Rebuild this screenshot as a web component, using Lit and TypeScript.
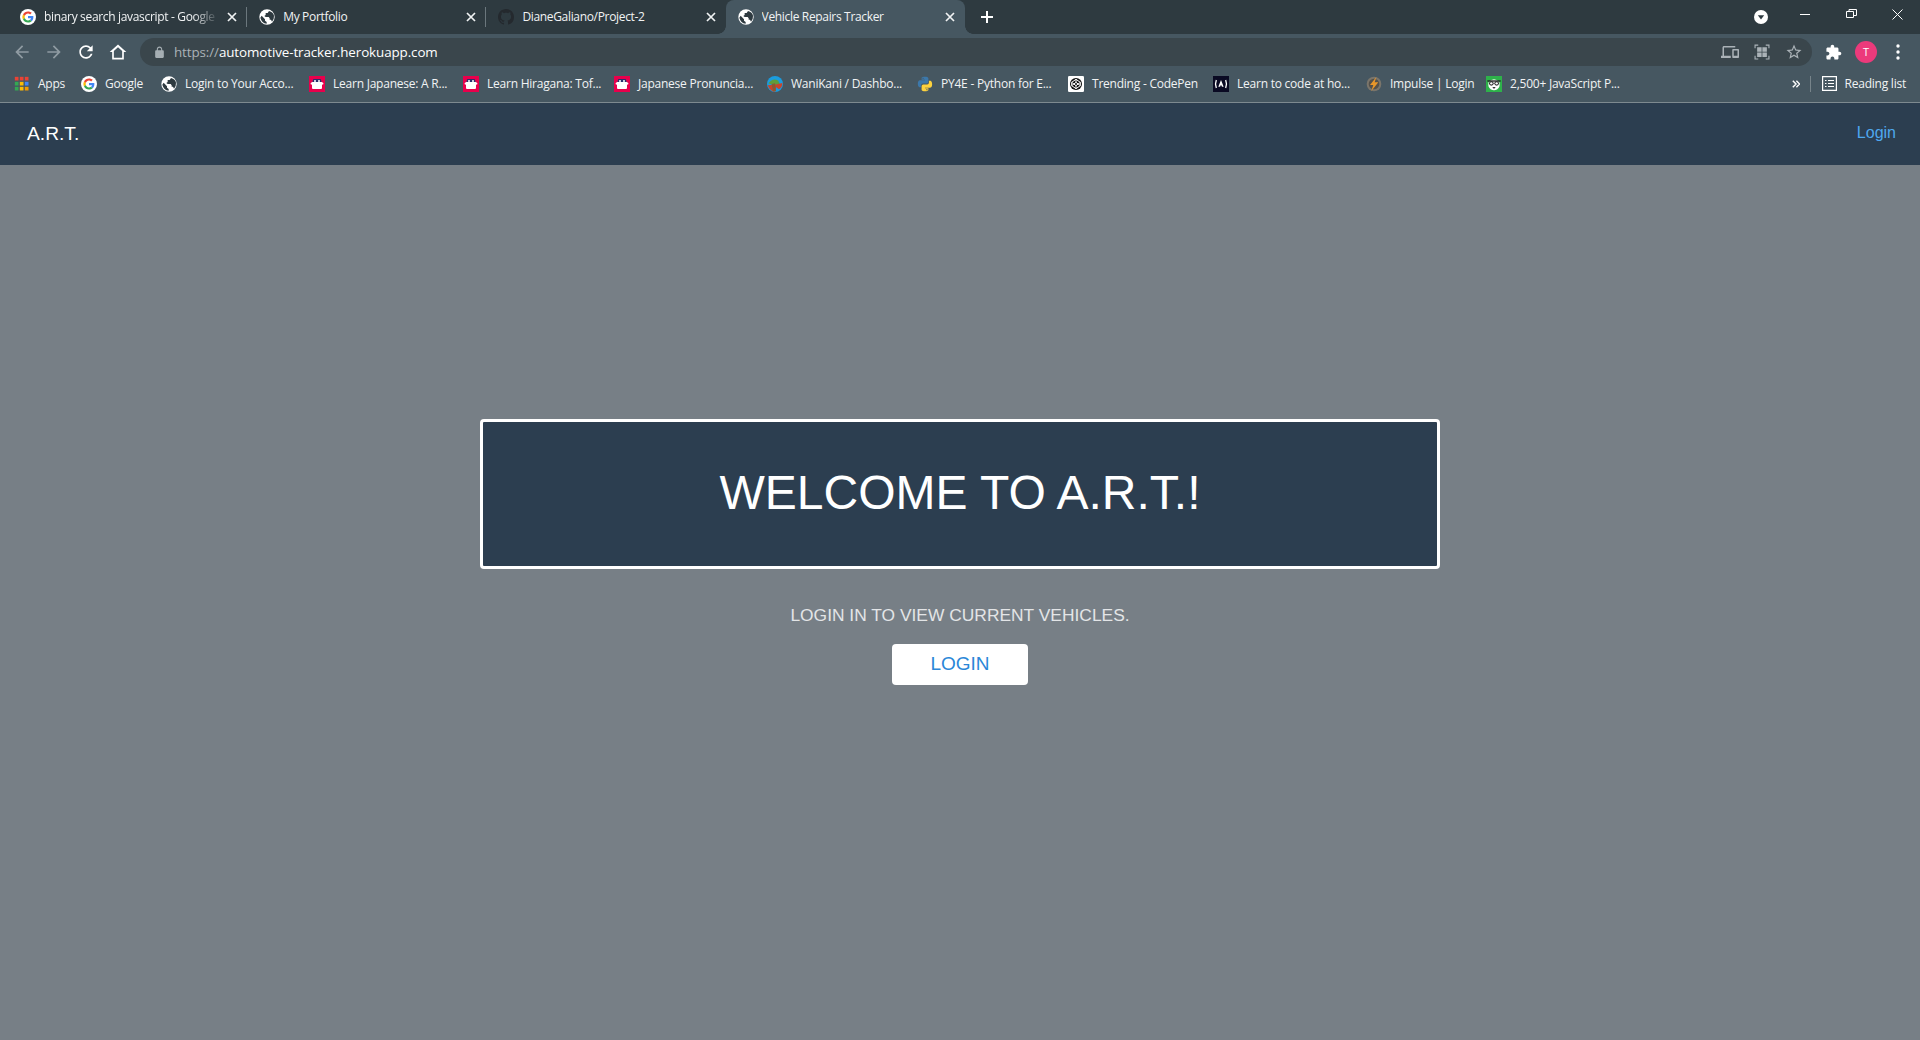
import { LitElement, html, css, svg } from 'lit';
import { customElement } from 'lit/decorators.js';

const google = svg`<circle cx="24" cy="24" r="24" fill="#fff"/><g transform="translate(7.2 7.2) scale(.7)"><path fill="#EA4335" d="M24 9.5c3.54 0 6.71 1.22 9.21 3.6l6.85-6.85C35.9 2.38 30.47 0 24 0 14.62 0 6.51 5.38 2.56 13.22l7.98 6.19C12.43 13.72 17.74 9.5 24 9.5z"/><path fill="#4285F4" d="M46.98 24.55c0-1.57-.15-3.09-.38-4.55H24v9.02h12.94c-.58 2.96-2.26 5.48-4.78 7.18l7.73 6c4.51-4.18 7.09-10.36 7.09-17.65z"/><path fill="#FBBC05" d="M10.53 28.59c-.48-1.45-.76-2.99-.76-4.59s.27-3.14.76-4.59l-7.98-6.19C.92 16.46 0 20.12 0 24c0 3.88.92 7.54 2.56 10.78l7.97-6.19z"/><path fill="#34A853" d="M24 48c6.48 0 11.93-2.13 15.89-5.81l-7.73-6c-2.15 1.45-4.92 2.3-8.16 2.3-6.26 0-11.57-4.22-13.47-9.91l-7.98 6.19C6.51 42.62 14.62 48 24 48z"/></g>`;
const globe = svg`<circle cx="24" cy="24" r="23" fill="#fff"/><g fill="#2e3a40"><path d="M8 20l10 11v4l5 4v5Q8 42 4 26z"/><path d="M30 6l-4 6h-6v6l-4 3 4 3h9l3 4v4h4l3 6q7-8 6-18-2-11-15-14z"/></g>`;
const github = svg`<g transform="scale(3)"><path fill="#24292e" d="M8 0C3.58 0 0 3.58 0 8c0 3.54 2.29 6.53 5.47 7.59.4.07.55-.17.55-.38 0-.19-.01-.82-.01-1.49-2.01.37-2.53-.49-2.69-.94-.09-.23-.48-.94-.82-1.13-.28-.15-.68-.52-.01-.53.63-.01 1.08.58 1.23.82.72 1.21 1.87.87 2.33.66.07-.52.28-.87.51-1.07-1.78-.2-3.64-.89-3.64-3.95 0-.87.31-1.59.82-2.15-.08-.2-.36-1.02.08-2.12 0 0 .67-.21 2.2.82.64-.18 1.32-.27 2-.27s1.36.09 2 .27c1.53-1.04 2.2-.82 2.2-.82.44 1.1.16 1.92.08 2.12.51.56.82 1.27.82 2.15 0 3.07-1.87 3.75-3.65 3.95.29.25.54.73.54 1.48 0 1.07-.01 1.93-.01 2.2 0 .21.15.46.55.38A8.01 8.01 0 0016 8c0-4.42-3.58-8-8-8z"/></g>`;
const tofugu = svg`<rect width="48" height="48" fill="#e8004c"/><path fill="#fff" d="M5 21l6-4h26l6 4v4l-4 1v10q0 3-3 3H12q-3 0-3-3V26l-4-1z"/><path fill="#28306e" d="M13 9h22l3 9H10z"/><circle cx="18" cy="15" r="3" fill="#fff"/><circle cx="30" cy="15" r="3" fill="#fff"/>`;
const wanikani = svg`<circle cx="24" cy="24" r="24" fill="#1a9ce0"/><path fill="#5f9e3c" d="M4 22q14-18 30-8l4 10-18 4z"/><path fill="#c8452c" d="M2 28l20-2 24-5q1 11-10 19l-8-6-6 14q-14-4-20-20z"/><path fill="#8a5a32" d="M14 24l10-2 3 24h-9z"/>`;
const python = svg`<g transform="scale(2)"><path fill="#3c78aa" d="M11.9 1C6.5 1 6.9 3.3 6.9 3.3V5.7H12v.7H4.8S1.3 6 1.3 11.5s3 5.3 3 5.3h1.8v-2.5s-.1-3 3-3h5.1s2.9 0 2.9-2.8V3.8S17.5 1 11.9 1zM9.1 2.6a.9.9 0 110 1.8.9.9 0 010-1.8z"/><path fill="#fdd23e" transform="rotate(180 12 12)" d="M11.9 1C6.5 1 6.9 3.3 6.9 3.3V5.7H12v.7H4.8S1.3 6 1.3 11.5s3 5.3 3 5.3h1.8v-2.5s-.1-3 3-3h5.1s2.9 0 2.9-2.8V3.8S17.5 1 11.9 1zM9.1 2.6a.9.9 0 110 1.8.9.9 0 010-1.8z"/></g>`;
const codepen = svg`<rect width="48" height="48" rx="4" fill="#fff"/><circle cx="24" cy="24" r="18" fill="#111"/><path fill="none" stroke="#fff" stroke-width="3" d="M24 10l13 9v10l-13 9-13-9V19zM24 10v9M24 29v9M11 19l13 10 13-10M11 29l13-10 13 10"/>`;
const fcc = svg`<rect width="48" height="48" fill="#0a0a23"/><path fill="none" stroke="#fff" stroke-width="4" d="M10 12q-5 12 0 24M38 12q5 12 0 24"/><path fill="#fff" d="M24 12l8 20h-5l-3-6-3 6h-5z"/>`;
const impulse = svg`<circle cx="24" cy="24" r="22" fill="#7a756b"/><circle cx="24" cy="24" r="16" fill="#54504a"/><path fill="#e8962a" d="M31 3L12 27h10l-6 18 21-26H26z"/>`;
const panda = svg`<rect width="48" height="48" fill="#2eb24a"/><path fill="#fff" d="M8 18q16-16 32 0 4 14-6 22-10 6-20 0Q4 32 8 18z"/><path fill="#222" d="M4 13h40v4H4z"/><circle cx="16" cy="22" r="7" fill="#333"/><circle cx="32" cy="22" r="7" fill="#333"/><circle cx="16" cy="22" r="3.5" fill="#fff"/><circle cx="32" cy="22" r="3.5" fill="#fff"/><path fill="#333" d="M19 33h10l-5 6z"/>`;
const apps = svg`${[
  ['#ea4335', '#ea4335', '#ea4335'],
  ['#34a853', '#fbbc05', '#4285f4'],
  ['#34a853', '#fbbc05', '#f29900'],
].map((row, r) => row.map((c, i) => svg`<rect x=${2.5 + i * 15} y=${2.5 + r * 15} width="11" height="11" fill=${c}/>`))}`;

interface Bookmark { icon: unknown; label: string; width: number }

const bookmarks: Bookmark[] = [
  { icon: apps, label: 'Apps', width: 67 },
  { icon: google, label: 'Google', width: 80 },
  { icon: globe, label: 'Login to Your Acco...', width: 148 },
  { icon: tofugu, label: 'Learn Japanese: A R...', width: 154 },
  { icon: tofugu, label: 'Learn Hiragana: Tof...', width: 151 },
  { icon: tofugu, label: 'Japanese Pronuncia...', width: 153 },
  { icon: wanikani, label: 'WaniKani / Dashbo...', width: 150 },
  { icon: python, label: 'PY4E - Python for E...', width: 151 },
  { icon: codepen, label: 'Trending - CodePen', width: 145 },
  { icon: fcc, label: 'Learn to code at ho...', width: 153 },
  { icon: impulse, label: 'Impulse | Login', width: 120 },
  { icon: panda, label: '2,500+ JavaScript P...', width: 152 },
];

const tabs = [
  { icon: google, label: 'binary search javascript - Google', cls: 'tab fade' },
  { icon: globe, label: 'My Portfolio', cls: 'tab' },
  { icon: github, label: 'DianeGaliano/Project-2', cls: 'tab plain' },
  { icon: globe, label: 'Vehicle Repairs Tracker', cls: 'tab active' },
];

const mat = (d: string, cls = '') => html`<svg class="mat ${cls}" viewBox="0 0 24 24"><path d=${d}></path></svg>`;

@customElement('app-root')
export class AppRoot extends LitElement {
  static styles = css`
    :host {
      display: flex;
      flex-direction: column;
      height: 100vh;
      background: #777f86;
      font-family: "Liberation Sans", Arial, sans-serif;
    }
    .chrome {
      font-family: "Open Sans", "Noto Sans", sans-serif;
      font-size: 12px;
      letter-spacing: -0.23px;
      color: #f1f3f4;
    }
    svg { display: block; flex: none; }
    .fav { width: 16px; height: 16px; }
    .mat { width: 20px; height: 20px; fill: #fff; }
    .dim { fill: #8f9ba2; }

    .tabstrip {
      display: flex;
      height: 34px;
      padding-left: 8px;
      background: #2e3a40;
    }
    .tab {
      position: relative;
      width: 239.2px;
      height: 34px;
      display: flex;
      align-items: center;
      padding: 0 10px 1px 12px;
      box-sizing: border-box;
      gap: 8px;
      letter-spacing: -0.33px;
    }
    .tab::after {
      content: "";
      position: absolute;
      right: 0;
      top: 7px;
      height: 20px;
      width: 1px;
      background: #6b777d;
    }
    .tab.plain::after { display: none; }
    .tab.active {
      background: #465761;
      border-radius: 8px 8px 0 0;
    }
    /* flared bottom corners of the selected tab */
    .tab.active::before, .tab.active::after {
      content: "";
      position: absolute;
      top: auto;
      bottom: 0;
      width: 8px;
      height: 8px;
      background: radial-gradient(circle at 0 0, transparent 7.5px, #465761 8px);
    }
    .tab.active::before {
      left: -8px;
    }
    .tab.active::after {
      right: -8px;
      background: radial-gradient(circle at 100% 0, transparent 7.5px, #465761 8px);
    }
    .title {
      flex: 1;
      white-space: nowrap;
      overflow: hidden;
    }
    .fade .title {
      -webkit-mask-image: linear-gradient(90deg, #000 85%, transparent 100%);
      mask-image: linear-gradient(90deg, #000 85%, transparent 100%);
    }
    .close { width: 10px; height: 10px; stroke: #f1f3f4; stroke-width: 1.7; fill: none; }
    .newtab { width: 12px; height: 12px; margin: 11px 0 0 16px; stroke: #fff; stroke-width: 2; fill: none; }
    .winctl {
      margin-left: auto;
      display: flex;
      align-items: flex-start;
    }
    .profile-drop { width: 14px; height: 14px; margin: 10px 32px 0 0; }
    .min { width: 10px; height: 1px; margin: 14px 36px 0 0; background: #fff; }
    .restore { width: 11px; height: 9px; margin: 9px 35px 0 0; fill: none; stroke: #fff; stroke-width: 1; }
    .x { width: 11px; height: 11px; margin: 9px 17px 0 0; stroke: #fff; stroke-width: 1; fill: none; }

    .toolbar {
      display: flex;
      height: 32px;
      padding: 4px 0 0 12px;
      box-sizing: border-box;
      background: #465761;
    }
    .navbtns { display: flex; gap: 12px; padding-top: 4px; }
    .omni {
      width: 1672px;
      height: 28px;
      margin-left: 12px;
      display: flex;
      align-items: center;
      box-sizing: border-box;
      padding: 0 9px 0 13px;
      border-radius: 14px;
      background: #3a464c;
      font-size: 13.4px;
      letter-spacing: -0.1px;
    }
    .omni .lock { width: 13px; height: 13px; fill: #a5aeb3; }
    .url { margin-left: 8px; flex: 1; white-space: nowrap; color: #fff; }
    .scheme { color: #aab2b7; }
    .omni-icons { display: flex; gap: 14px; }
    .omni-icons svg { width: 18px; height: 18px; fill: #aab2b7; }
    .tools { display: flex; align-items: center; height: 28px; }
    .puzzle { width: 17px; height: 17px; margin-left: 13px; }
    .avatar {
      width: 22px;
      height: 22px;
      margin-left: 13px;
      border-radius: 50%;
      background: #ec3a7b;
      color: #fff;
      font-size: 11px;
      line-height: 22px;
      text-align: center;
    }
    .dots { width: 4px; height: 16px; margin-left: 19px; fill: #fff; }

    .bookmarks {
      display: flex;
      align-items: center;
      height: 37px;
      padding: 0 14px 1px 14px;
      box-sizing: border-box;
      background: #465761;
      border-bottom: 1px solid #7e8a90;
    }
    .bm { display: flex; align-items: center; gap: 8px; white-space: nowrap; flex: none; }
    .right { margin-left: auto; display: flex; align-items: center; }
    .more { width: 8px; height: 8px; fill: none; stroke: #fff; stroke-width: 1.8; }
    .sep { width: 1px; height: 16px; margin: 0 11px 0 10px; background: #77848a; }
    .reading { width: 15px; height: 15px; margin-right: 8px; fill: none; stroke: #fff; stroke-width: 1.2; }

    .navbar {
      display: flex;
      align-items: center;
      justify-content: space-between;
      height: 62px;
      padding: 0 24px 0 27px;
      background: #2c3e50;
    }
    .brand { font-size: 19.2px; color: #fff; }
    .link { font-size: 16px; color: #4fa8ee; margin-top: -3px; }

    main {
      flex: 1;
      display: flex;
      flex-direction: column;
      align-items: center;
      padding-top: 254px;
    }
    .banner {
      width: 960px;
      height: 150px;
      display: flex;
      align-items: center;
      justify-content: center;
      box-sizing: border-box;
      border: 3px solid #fff;
      border-radius: 4px;
      background: #2c3e50;
    }
    h1 { margin: 0 0 3px; font-size: 48px; font-weight: 400; color: #fff; }
    p {
      margin: 35px 0 0;
      font-size: 17.4px;
      line-height: 22px;
      color: #e3e5e7;
    }
    button {
      width: 136px;
      height: 41px;
      margin-top: 18px;
      padding: 0 0 2px;
      border: none;
      border-radius: 4px;
      background: #fff;
      color: #2a87d8;
      font: 19px "Liberation Sans", Arial, sans-serif;
    }
  `;

  render() {
    return html`
      <div class="chrome">
        <div class="tabstrip">
          ${tabs.map(t => html`
            <div class=${t.cls}>
              <svg class="fav" viewBox="0 0 48 48">${t.icon}</svg>
              <span class="title">${t.label}</span>
              <svg class="close" viewBox="0 0 10 10"><path d="M1 1l8 8M9 1l-8 8"></path></svg>
            </div>
          `)}
          <svg class="newtab" viewBox="0 0 12 12"><path d="M6 0v12M0 6h12"></path></svg>
          <div class="winctl">
            <svg class="profile-drop" viewBox="0 0 14 14"><circle cx="7" cy="7" r="7" fill="#fff"></circle><path d="M3.8 5.2h6.4L7 9.6z" fill="#2e3a40"></path></svg>
            <div class="min"></div>
            <svg class="restore" viewBox="0 0 11 9"><path d="M.5 2.5h7v6h-7zM3 2.5V.5h7.5v6h-3"></path></svg>
            <svg class="x" viewBox="0 0 11 11"><path d="M.5.5l10 10M10.5.5l-10 10"></path></svg>
          </div>
        </div>
        <div class="toolbar">
          <div class="navbtns">
            ${mat('M20 11H7.83l5.59-5.59L12 4l-8 8 8 8 1.41-1.41L7.83 13H20v-2z', 'dim')}
            ${mat('M12 4l-1.41 1.41L16.17 11H4v2h12.17l-5.58 5.59L12 20l8-8z', 'dim')}
            ${mat('M17.65 6.35C16.2 4.9 14.21 4 12 4c-4.42 0-7.99 3.58-7.99 8s3.57 8 7.99 8c3.73 0 6.84-2.55 7.73-6h-2.08c-.82 2.33-3.04 4-5.65 4-3.31 0-6-2.69-6-6s2.69-6 6-6c1.66 0 3.14.69 4.22 1.78L13 11h7V4l-2.35 2.35z')}
            ${mat('M12 3L2 12h3v9h14v-9h3L12 3zm0 3.2l5 4.5V19H7v-8.3l5-4.5z')}
          </div>
          <div class="omni">
            ${mat('M18 8h-1V6c0-2.76-2.24-5-5-5S7 3.24 7 6v2H6c-1.1 0-2 .9-2 2v10c0 1.1.9 2 2 2h12c1.1 0 2-.9 2-2V10c0-1.1-.9-2-2-2zM9 6c0-1.66 1.34-3 3-3s3 1.34 3 3v2H9V6z', 'lock')}
            <span class="url"><span class="scheme">https://</span>automotive-tracker.herokuapp.com</span>
            <div class="omni-icons">
              ${mat('M4 6h15V4H4c-1.1 0-2 .9-2 2v11H0v3h13v-3H4V6zm19 2h-7c-.55 0-1 .45-1 1v10c0 .55.45 1 1 1h7c.55 0 1-.45 1-1V9c0-.55-.45-1-1-1zm-1 9h-5v-7h5v7z')}
              ${mat('M2 2h5v1.500H3.500V7H2zM17 2h5v5h-1.500V3.500H17zM2 17h1.500v3.500H7V22H2zM20.500 17H22v5h-5v-1.500h3.500zM5.500 5.500h6v6h-6zM12.500 5.500h6v6h-6zM5.500 12.500h6v6h-6zM12.500 12.500h6v6h-6z')}
              ${mat('M22 9.24l-7.19-.62L12 2 9.19 8.63 2 9.24l5.46 4.73L5.82 21 12 17.27 18.18 21l-1.63-7.03L22 9.24zM12 15.4l-3.76 2.27 1-4.28-3.32-2.88 4.38-.38L12 6.1l1.71 4.04 4.38.38-3.32 2.88 1 4.28L12 15.4z')}
            </div>
          </div>
          <div class="tools">
            ${mat('M20.5 11H19V7c0-1.100-.9-2-2-2h-4V3.500C13 2.120 11.880 1 10.500 1S8 2.120 8 3.500V5H4c-1.100 0-1.990.9-1.990 2v3.800H3.500c1.490 0 2.700 1.210 2.700 2.700s-1.210 2.700-2.700 2.700H2V20c0 1.100.9 2 2 2h3.800v-1.500c0-1.490 1.210-2.700 2.700-2.700 1.490 0 2.700 1.210 2.700 2.700V22H17c1.100 0 2-.9 2-2v-4h1.500c1.380 0 2.500-1.120 2.500-2.500S21.880 11 20.500 11z', 'puzzle')}
            <div class="avatar">T</div>
            <svg class="dots" viewBox="0 0 4 16"><circle cx="2" cy="2" r="1.700"></circle><circle cx="2" cy="8" r="1.700"></circle><circle cx="2" cy="14" r="1.700"></circle></svg>
          </div>
        </div>
        <div class="bookmarks">
          ${bookmarks.map(b => html`
            <div class="bm" style="width:${b.width}px">
              <svg class="fav" viewBox="0 0 48 48">${b.icon}</svg>
              <span>${b.label}</span>
            </div>
          `)}
          <div class="right">
            <svg class="more" viewBox="0 0 10 10"><path d="M1 1l4 4-4 4M5.500 1l4 4-4 4"></path></svg>
            <div class="sep"></div>
            <svg class="reading" viewBox="0 0 15 15"><path d="M.6.6h13.800v13.800H.6zM3 4.500h1.500M6 4.500h6M3 7.500h1.500M6 7.500h6M3 10.500h1.500M6 10.500h6"></path></svg>
            <span>Reading list</span>
          </div>
        </div>
      </div>
      <nav class="navbar">
        <span class="brand">A.R.T.</span>
        <a class="link">Login</a>
      </nav>
      <main>
        <div class="banner"><h1>WELCOME TO A.R.T.!</h1></div>
        <p>LOGIN IN TO VIEW CURRENT VEHICLES.</p>
        <button>LOGIN</button>
      </main>
    `;
  }
}
